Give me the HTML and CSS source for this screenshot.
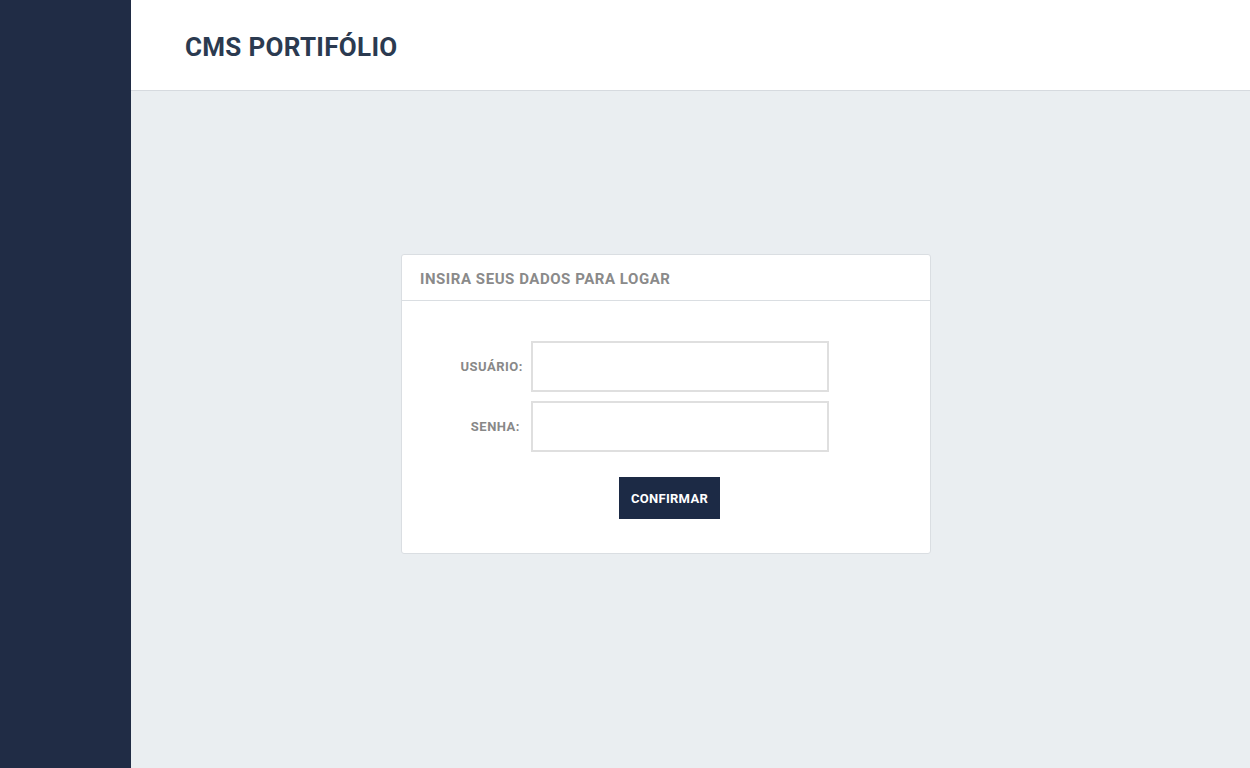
FILE: index.html
```html
<!DOCTYPE html>
<html lang="pt-BR">
<head>
<meta charset="utf-8">
<title>CMS Portifólio</title>
<link rel="stylesheet" href="styles.css">
</head>
<body>
<div class="app">
  <aside class="sidebar"></aside>
  <div class="main">
    <header class="topbar">
      <h1 class="brand">CMS PORTIFÓLIO</h1>
    </header>
    <section class="content">
      <div class="card">
        <div class="card-head">INSIRA SEUS DADOS PARA LOGAR</div>
        <form class="card-body">
          <div class="row">
            <label class="label" for="u">USUÁRIO:</label>
            <input class="field" id="u" type="text">
          </div>
          <div class="row">
            <label class="label label-s" for="p">SENHA:</label>
            <input class="field" id="p" type="password">
          </div>
          <div class="actions">
            <button class="btn" type="button">CONFIRMAR</button>
          </div>
        </form>
      </div>
    </section>
  </div>
</div>
</body>
</html>
```

FILE: styles.css
```css
* { box-sizing: border-box; }
html, body { margin: 0; height: 100%; }
body {
  font-family: Roboto, "Liberation Sans", sans-serif;
  background: #eaeef1;
}
.app { display: flex; height: 768px; }
.sidebar { width: 131px; flex: none; background: #202c45; }
.main { flex: 1; display: flex; flex-direction: column; }
.topbar {
  height: 91px;
  background: #fff;
  border-bottom: 1px solid #d6dadf;
  display: flex;
  align-items: center;
  padding-left: 54px;
}
.brand {
  margin: 0;
  font-size: 26px;
  font-weight: 700;
  color: #2b3a50;
  letter-spacing: 0.3px;
  padding-top: 3px;
}
.content {
  flex: 1;
  display: flex;
  justify-content: flex-start;
  padding: 163px 0 0 270px;
}
.card {
  width: 530px;
  height: 300px;
  background: #fff;
  border: 1px solid #dadee2;
  border-radius: 3px;
}
.card-head {
  height: 46px;
  border-bottom: 1px solid #dadee2;
  padding: 15px 0 0 18px;
  font-size: 15px;
  font-weight: 700;
  color: #8a8a8a;
  letter-spacing: 0.55px;
}
.card-body {
  padding: 40px 0 0 0;
  display: flex;
  flex-direction: column;
}
.row {
  display: flex;
  align-items: center;
  height: 51px;
  margin-bottom: 9px;
}
.label {
  width: 129px;
  text-align: right;
  padding-right: 8px;
  font-size: 13px;
  font-weight: 700;
  color: #888;
  letter-spacing: 0.5px;
}
.label-s { padding-right: 11px; }
.field {
  width: 298px;
  height: 51px;
  border: 2px solid #dfdfdf;
  background: #fff;
  margin: 0;
  outline: none;
}
.actions {
  display: flex;
  justify-content: flex-start;
  padding-left: 217px;
  margin-top: 16px;
}
.btn {
  width: 101px;
  height: 42px;
  border: none;
  background: #1c2a45;
  color: #fff;
  font-family: Roboto, "Liberation Sans", sans-serif;
  font-size: 13px;
  font-weight: 700;
  letter-spacing: 0.3px;
  padding: 0;
}
```
